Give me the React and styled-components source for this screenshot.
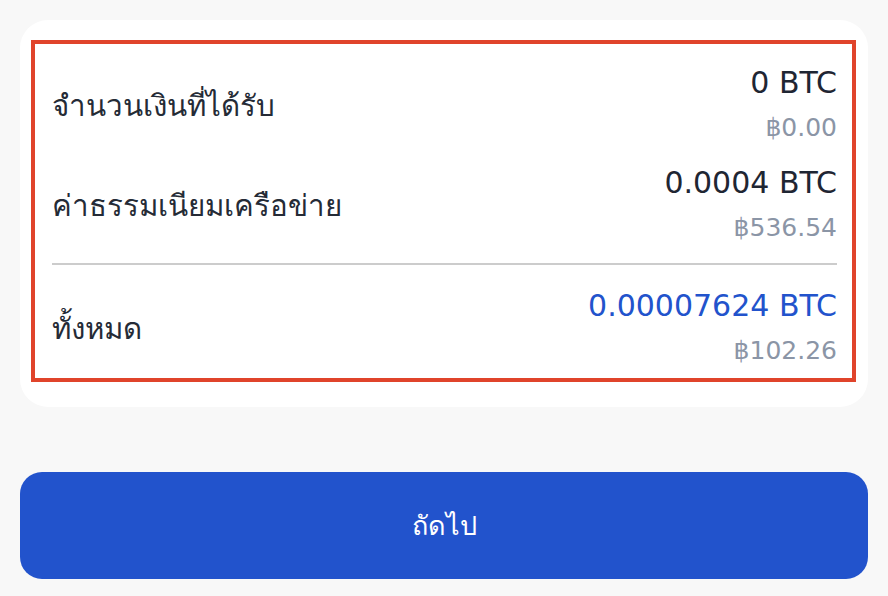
import React from 'react';
import styled, { createGlobalStyle } from 'styled-components';

const GlobalStyle = createGlobalStyle`
  html, body {
    margin: 0;
    padding: 0;
    background: #f8f8f8;
  }

  body {
    font-family: 'Noto Sans', 'DejaVu Sans', sans-serif;
    color: #1f2633;
  }
`;

const StyledPage = styled.div`
  box-sizing: border-box;
  height: 596px;
  padding: 20px;
  display: flex;
  flex-direction: column;
  gap: 65px;
`;

const StyledCard = styled.section`
  flex-shrink: 0;
  background: #fff;
  border-radius: 28px;
  padding: 20px 12px 25px 11px;
`;

const StyledSummary = styled.div`
  border: 4px solid #e0442b;
  padding: 11px 15px 0 17px;
`;

const StyledRow = styled.div`
  display: flex;
  align-items: center;
  justify-content: space-between;
  padding: 5px 0;
`;

const StyledLabel = styled.span`
  font-size: 29.5px;
  color: #252b36;
`;

const StyledValues = styled.div`
  display: flex;
  flex-direction: column;
  align-items: flex-end;
  font-family: 'DejaVu Sans', 'Noto Sans', sans-serif;
`;

const StyledAmount = styled.span`
  font-size: 30px;
  line-height: 45px;
  color: ${({ highlight }) => (highlight ? '#2253cc' : '#1f2633')};
`;

const StyledFiat = styled.span`
  font-size: 25px;
  line-height: 45px;
  color: #8b95a6;
`;

const StyledDivider = styled.hr`
  border: 0;
  height: 2px;
  background: #cccccc;
  margin: 8px 0 13px;
`;

const StyledButton = styled.button`
  flex-shrink: 0;
  height: 107px;
  border: 0;
  border-radius: 22px;
  background: #2253cc;
  color: #fff;
  font-family: inherit;
  font-size: 27px;
`;

const rows = [
  { label: 'จำนวนเงินที่ได้รับ', amount: '0 BTC', fiat: '฿0.00' },
  { label: 'ค่าธรรมเนียมเครือข่าย', amount: '0.0004 BTC', fiat: '฿536.54' },
];

const total = { label: 'ทั้งหมด', amount: '0.00007624 BTC', fiat: '฿102.26' };

const Row = ({ label, amount, fiat, highlight }) => (
  <StyledRow>
    <StyledLabel>{label}</StyledLabel>
    <StyledValues>
      <StyledAmount highlight={highlight}>{amount}</StyledAmount>
      <StyledFiat>{fiat}</StyledFiat>
    </StyledValues>
  </StyledRow>
);

const App = () => (
  <>
    <GlobalStyle />
    <StyledPage>
      <StyledCard>
        <StyledSummary>
          {rows.map(row => (
            <Row key={row.label} {...row} />
          ))}
          <StyledDivider />
          <Row {...total} highlight />
        </StyledSummary>
      </StyledCard>
      <StyledButton type="button">ถัดไป</StyledButton>
    </StyledPage>
  </>
);

export default App;
